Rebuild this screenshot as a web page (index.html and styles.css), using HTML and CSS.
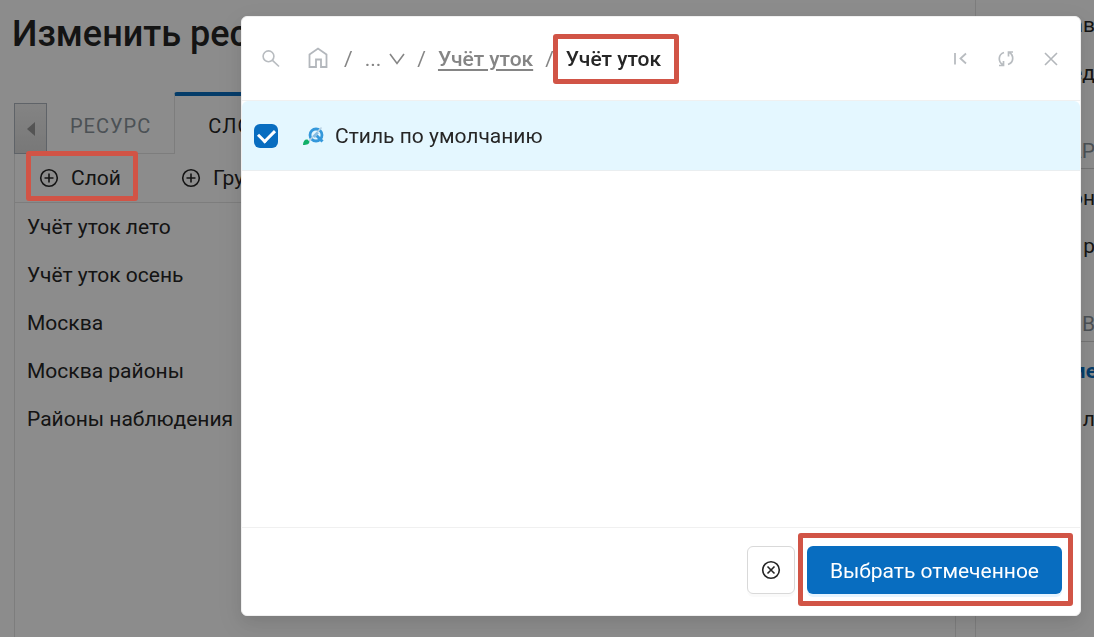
FILE: index.html
```html
<!DOCTYPE html>
<html lang="ru">
<head>
<meta charset="utf-8">
<title>Изменить ресурс</title>
<link rel="stylesheet" href="styles.css">
</head>
<body>
<div class="page">
  <main class="content">
    <h1 class="title">Изменить ресурс</h1>
    <div class="panel">
      <div class="tabs">
        <button class="tab-scroll" type="button" aria-label="Назад"><svg width="8" height="14" viewBox="0 0 8 14"><path d="M8 0v14L0 7z" fill="#999"/></svg></button>
        <button class="tab" type="button">РЕСУРС</button>
        <button class="tab tab-active" type="button">СЛОИ</button>
      </div>
      <div class="toolbar">
        <button class="tool" type="button"><svg class="tool-icon" viewBox="0 0 20 20"><circle cx="10" cy="10" r="8.3"/><path d="M10 5.5v9M5.5 10h9"/></svg>Слой</button>
        <button class="tool" type="button"><svg class="tool-icon" viewBox="0 0 20 20"><circle cx="10" cy="10" r="8.3"/><path d="M10 5.5v9M5.5 10h9"/></svg>Группа</button>
      </div>
      <ul class="layers">
        <li>Учёт уток лето</li>
        <li>Учёт уток осень</li>
        <li>Москва</li>
        <li>Москва районы</li>
        <li>Районы наблюдения</li>
      </ul>
    </div>
  </main>
  <aside class="sidebar">
    <div class="side-item">ав</div>
    <div class="side-item">ед</div>
    <div class="side-head">АР</div>
    <div class="side-item">он</div>
    <div class="side-item">р</div>
    <div class="side-head">В</div>
    <div class="side-item side-current">ме</div>
    <div class="side-item">л</div>
  </aside>
</div>
<div class="backdrop"></div>
<div class="callout callout-layer"></div>
<section class="modal" role="dialog" aria-label="Выбор ресурса">
  <header class="modal-head">
    <button class="icon-btn search" type="button" aria-label="Поиск"><svg width="18" height="18" viewBox="0 0 18 18" fill="none" stroke="#b8bcc0" stroke-width="1.6"><circle cx="6.500" cy="6.300" r="5.400"/><path d="M10.500 10.300l6.500 6.200"/></svg></button>
    <nav class="crumbs">
      <a class="home" href="#" aria-label="Главная"><svg width="20" height="22" viewBox="0 0 20 22" fill="none" stroke="#b3b7bc" stroke-width="1.800"><path d="M1.500 7.500L10 1.500 18.500 7.500v12.500h-5.500v-7.500h-5v7.500H1.500z"/></svg></a>
      <span class="sep">/</span>
      <a class="more" href="#">...<svg width="16" height="12" viewBox="0 0 16 12" fill="none" stroke="#858585" stroke-width="1.6"><path d="M1 1l7 9.500L15 1"/></svg></a>
      <span class="sep">/</span>
      <a class="crumb" href="#">Учёт уток</a>
      <span class="sep">/</span>
      <span class="crumb-current callout-around">Учёт уток</span>
    </nav>
    <div class="actions">
      <button class="icon-btn" type="button" aria-label="В начало"><svg width="18" height="18" viewBox="0 0 18 18" fill="none" stroke="#b8bcc0" stroke-width="1.8"><path d="M3 3v11.500M14 3.500L8.500 8.500l5.500 5"/></svg></button>
      <button class="icon-btn" type="button" aria-label="Обновить"><svg width="18" height="18" viewBox="0 0 18 18" fill="none" stroke="#b8bcc0" stroke-width="1.7"><path d="M7 2.500C1 4.500 1 11.500 5.500 14.500M2 15.500h4.500V11M11 14.500C17 12.500 17 5.500 12.500 2.500M16 2h-4.500v4.500"/></svg></button>
      <button class="icon-btn" type="button" aria-label="Закрыть"><svg width="18" height="18" viewBox="0 0 18 18" fill="none" stroke="#b3b7bb" stroke-width="1.6"><path d="M3 3l12 12M15 3L3 15"/></svg></button>
    </div>
  </header>
  <div class="modal-body">
    <label class="row">
      <input class="check" type="checkbox" checked>
      <svg class="style-icon" width="22" height="20" viewBox="0 0 22 20" fill="none"><path d="M1 19c0-4 2-6 4.500-5.500l2 2c0 2.500-2.500 3.500-6.500 3.500z" fill="#10b068"/><circle cx="14" cy="9" r="6" stroke="#3498db" stroke-width="2.800"/><path d="M14.500 9.500l6 6" stroke="#3498db" stroke-width="3"/><path d="M7 15L19.500 1.500" stroke="#b9d2e4" stroke-width="1.600"/><path d="M10.500 10l4-4 2.500 1-4 5z" fill="#86bde3"/></svg>
      <span>Стиль по умолчанию</span>
    </label>
  </div>
  <footer class="modal-foot">
    <button class="btn btn-cancel" type="button" aria-label="Отмена"><svg class="tool-icon" viewBox="0 0 20 20"><circle cx="10" cy="10" r="8.300"/><path d="M6.500 6.500l7 7M13.500 6.500l-7 7"/></svg></button>
    <button class="btn btn-primary callout-around" type="button">Выбрать отмеченное</button>
  </footer>
</section>
</body>
</html>
```
FILE: styles.css
```css
* { box-sizing: border-box; }
body {
  margin: 0;
  font-family: Roboto, "Noto Sans", sans-serif;
  font-size: 21px;
  line-height: 32px;
  color: #262626;
  background: #fff;
  overflow: hidden;
}
button { font: inherit; color: inherit; background: none; border: 0; padding: 0; }
a { color: inherit; text-decoration: none; }
svg { display: block; flex: none; }

.page { display: flex; height: 100vh; }
.content { flex: 1; min-width: 0; padding: 12px 19px 0 12px; display: flex; flex-direction: column; }
.title { margin: 0; font-size: 36px; line-height: 44px; font-weight: 500; }
.panel { flex: 1; margin: 36px 0 0 2px; display: flex; flex-direction: column; }
.tabs { display: flex; align-items: flex-end; height: 62px; }
.tab-scroll {
  display: grid; place-items: center;
  width: 33px; height: 51px;
  border: 1px solid #aeb4bd;
  background: linear-gradient(#f0f0f0, #dadada);
}
.tab { height: 50px; padding: 0 23px 6px; font-size: 20px; color: #8a949c; border-bottom: 1px solid #e4e4e4; letter-spacing: 1px; }
.tab-active { height: 62px; padding: 2px 33px 0; color: #262626; border-top: 4px solid #086dc0; border-left: 1px solid #e4e4e4; border-bottom: 0; border-radius: 3px 3px 0 0; }
.toolbar { display: flex; gap: 60px; height: 49px; padding-left: 24px; border-left: 1px solid #e4e4e4; border-bottom: 1px solid #e4e4e4; }
.tool { display: flex; align-items: center; gap: 12px; }
.tool-icon { width: 20px; height: 20px; fill: none; stroke: #262626; stroke-width: 1.6; }
.layers { flex: 1; margin: 0; padding: 0 12px; list-style: none; line-height: 48px; border-left: 1px solid #e4e4e4; border-right: 1px solid #e4e4e4; }

.sidebar { width: 119px; padding-top: 1px; border-left: 1px solid #e4e4e4; text-align: right; overflow: hidden; }
.side-item { line-height: 48px; margin-right: -1px; }
.side-head { height: 48px; line-height: 60px; margin: 24px -1px 5px 0; color: #8a949c; border-bottom: 1px solid #d4d4d4; }
.side-current { color: #086dc0; font-weight: 700; margin-right: -3px; }

.backdrop { position: fixed; inset: 0; background: rgba(0, 0, 0, .45); }

.modal {
  position: fixed; top: 16px; right: 13px; bottom: 21px; left: 241px;
  display: flex; flex-direction: column;
  background: #fff; border: 1px solid #f0f0f0; border-radius: 6px;
  box-shadow: 0 9px 28px 8px rgba(0, 0, 0, .05), 0 6px 16px rgba(0, 0, 0, .08);
}
.modal-head { display: flex; align-items: center; height: 84px; padding: 0 20px; border-bottom: 1px solid #f0f0f0; }
.crumbs { display: flex; align-items: center; margin-left: 28px; color: #858585; }
.sep { margin: 0 12px; }
.home { padding: 0 4px 2px 0; }
.more { display: flex; align-items: center; gap: 8px; }
.crumb { font-weight: 500; text-decoration: underline; text-underline-offset: 3px; text-decoration-thickness: 2px; }
.crumb-current { color: #262626; font-weight: 500; }
.actions { display: flex; gap: 27px; margin-left: auto; }
.modal-body { flex: 1; }
.row { display: flex; align-items: center; height: 70px; padding: 0 12px; background: #e4f7ff; border-bottom: 1px solid #eaeef0; border-radius: 6px 6px 0 0; }
.check { appearance: none; width: 24px; height: 24px; margin: 0; border-radius: 6px; background: #086dc0; display: grid; place-items: center; }
.check:checked::before { content: ""; width: 8px; height: 13px; margin-bottom: 3px; border: solid #fff; border-width: 0 3px 3px 0; transform: rotate(45deg); }
.style-icon { margin: 0 11px 0 24px; }
.modal-foot { display: flex; justify-content: flex-end; gap: 12px; padding: 18px 18px 21px; border-top: 1px solid #f0f0f0; }
.btn { height: 48px; border-radius: 6px; }
.btn-cancel { display: grid; place-items: center; width: 48px; border: 1px solid #d9d9d9; box-shadow: 0 3px 0 rgba(0, 0, 0, .02); }
.btn-primary { padding: 2px 23px 0; color: #fff; background: #086dc0; box-shadow: 0 3px 0 rgba(5, 145, 255, .1); }

.callout, .callout-around::after { position: absolute; border: 5px solid #d15446; border-radius: 3px; pointer-events: none; }
.callout-layer { top: 151px; left: 26px; width: 112px; height: 50px; }
.callout-around { position: relative; }
.callout-around::after { content: ""; }
.crumb-current::after { inset: -9px -18px -9px -13px; }
.btn-primary::after { inset: -13px -11px -12px -9px; }
```
